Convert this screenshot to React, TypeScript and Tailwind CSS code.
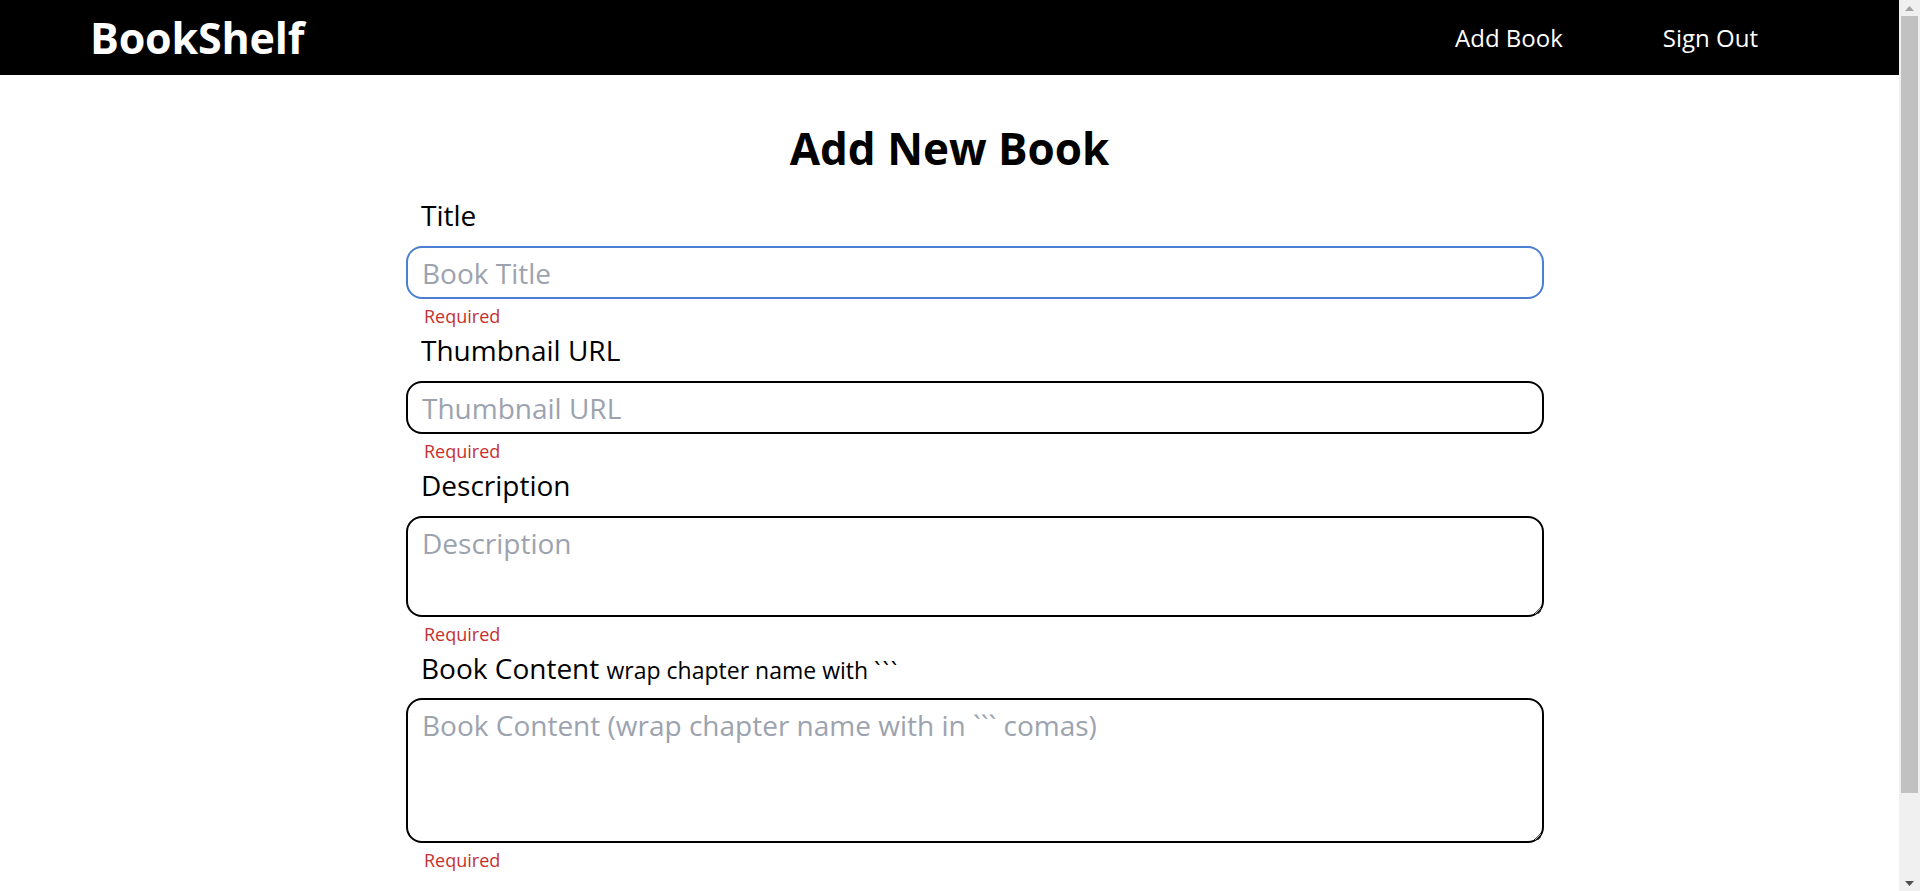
import React from 'react'

function Required() {
  return <p className="mt-[5px] pl-[18px] text-[18px] leading-[24px] text-[#c53030]">Required</p>
}

function Label({ children }: { children: React.ReactNode }) {
  return <label className="block mt-[4px] pl-[15px] text-[28px] leading-[36px] text-black">{children}</label>
}

export default function App() {
  return (
    <div className="flex h-[891px] w-full overflow-hidden bg-white font-['Open_Sans',sans-serif]">
      <div className="flex-1 min-w-0 flex flex-col">
        {/* NAV */}
        <nav className="h-[75px] shrink-0 bg-black text-white flex items-center justify-between pl-[90px] pr-[141px]">
          <span className="text-[43px] font-bold leading-none tracking-[-0.2px]">BookShelf</span>
          <div className="flex items-center gap-[100px] text-[24px] leading-none">
            <a href="#" className="text-white">Add Book</a>
            <a href="#" className="text-white">Sign Out</a>
          </div>
        </nav>

        <h1 className="mt-[47px] text-center text-[44px] font-bold leading-[52px] text-black">Add New Book</h1>

        {/* FORM */}
        <form className="pl-[406px] mt-[19px]">
          <div className="w-[1138px]">
            <Label>Title</Label>
            <input
              type="text"
              placeholder="Book Title"
              className="mt-[13px] block w-full h-[53px] rounded-[16px] border-2 border-[#4a7fd4] px-[14px] text-[28px] leading-[36px] outline-none placeholder:text-[#9ca3af]"
            />
            <Required />

            <Label>Thumbnail URL</Label>
            <input
              type="text"
              placeholder="Thumbnail URL"
              className="mt-[13px] block w-full h-[53px] rounded-[16px] border-2 border-black px-[14px] text-[28px] leading-[36px] outline-none placeholder:text-[#9ca3af]"
            />
            <Required />

            <Label>Description</Label>
            <textarea
              placeholder="Description"
              className="mt-[13px] block w-full h-[101px] rounded-[16px] border-2 border-black px-[14px] pt-[7px] text-[28px] leading-[36px] outline-none resize-y placeholder:text-[#9ca3af]"
            />
            <Required />

            <Label>
              Book Content <span className="text-[23px] leading-none">wrap chapter name with <span className="tracking-[2px]">```</span></span>
            </Label>
            <textarea
              placeholder="Book Content (wrap chapter name with in ``` comas)"
              className="mt-[12px] block w-full h-[145px] rounded-[16px] border-2 border-black px-[14px] pt-[7px] text-[28px] leading-[36px] outline-none resize-y placeholder:text-[#9ca3af]"
            />
            <Required />
          </div>
        </form>
      </div>

      {/* SCROLLBAR */}
      <div className="w-[21px] shrink-0 bg-[#f0f0f0] flex flex-col items-center">
        <div className="h-[16px] w-full flex items-center justify-center">
          <svg width="9" height="5" viewBox="0 0 9 5"><path d="M0 5 L4.5 0 L9 5 Z" fill="#a3a3a3" /></svg>
        </div>
        <div className="h-[777px] w-[17px] bg-[#c1c1c1]" />
        <div className="flex-1" />
        <div className="h-[16px] w-full flex items-center justify-center">
          <svg width="9" height="5" viewBox="0 0 9 5"><path d="M0 0 L9 0 L4.5 5 Z" fill="#505050" /></svg>
        </div>
      </div>
    </div>
  )
}
